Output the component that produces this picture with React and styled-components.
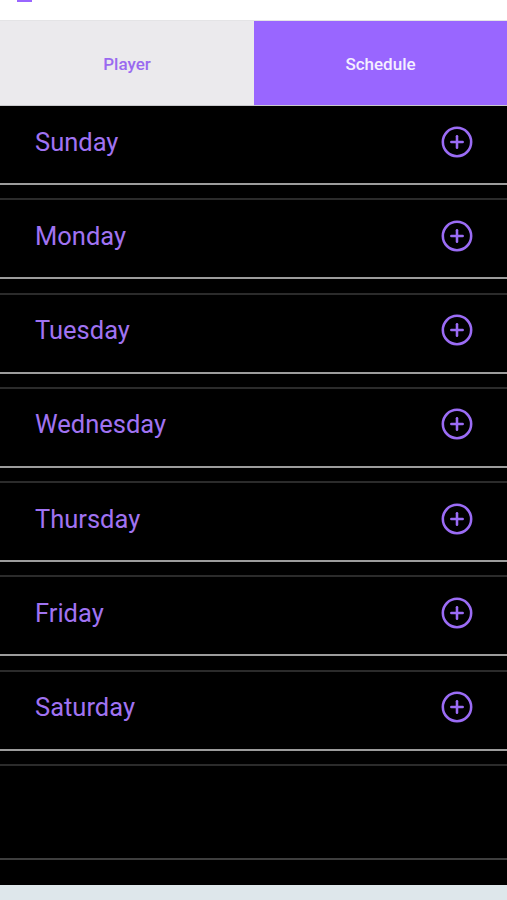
import React from 'react';
import styled, { createGlobalStyle } from 'styled-components';
import { CirclePlus } from 'lucide-react';

const GlobalStyle = createGlobalStyle`
  html, body {
    margin: 0;
    padding: 0;
    background: #000;
    font-family: Roboto, "Liberation Sans", sans-serif;
  }
`;

const days = ['Sunday', 'Monday', 'Tuesday', 'Wednesday', 'Thursday', 'Friday', 'Saturday'];

const Screen = styled.div`
  width: 507px;
  height: 900px;
  display: flex;
  flex-direction: column;
  background: #000;
  overflow: hidden;
`;

const TopBar = styled.div`
  height: 21px;
  background: #fff;
  border-bottom: 1px solid #e4e4e6;
  box-sizing: border-box;
  padding-left: 17px;
`;

const TopMark = styled.div`
  width: 15px;
  height: 2px;
  background: #9966ff;
`;

const Tabs = styled.div`
  display: grid;
  grid-template-columns: 254px 1fr;
  height: 84px;
  border-bottom: 1px solid #c9c9cc;
`;

const Tab = styled.div`
  display: flex;
  align-items: center;
  justify-content: center;
  font-size: 17px;
  font-weight: 500;
  padding-top: 2px;
  background: ${({ active }) => (active ? '#9966ff' : '#ebeaed')};
  color: ${({ active }) => (active ? '#f4efff' : '#9a6af0')};
`;

const List = styled.div`
  display: flex;
  flex-direction: column;
  gap: 13.3px;
`;

const DayRow = styled.div`
  display: flex;
  align-items: center;
  justify-content: space-between;
  height: ${({ tall, first }) => (tall ? '96px' : first ? '79px' : '81px')};
  padding: 0 33px 6px 35px;
  border-top: ${({ first }) => (first ? 'none' : '2px solid #2b2b2b')};
  border-bottom: 2px solid ${({ tall }) => (tall ? '#3e3e3e' : '#9c9c9c')};
  box-sizing: border-box;
`;

const DayName = styled.span`
  font-size: 25.5px;
  color: #a073f2;
`;

const AddButton = styled.button`
  background: none;
  border: none;
  padding: 0;
  display: flex;
  color: #9b6cf5;
`;

const Spacer = styled.div`
  flex: 1;
`;

const Footer = styled.div`
  height: 15px;
  background: #dee7eb;
`;

export default function App() {
  return (
    <>
      <GlobalStyle />
      <Screen>
        <TopBar>
          <TopMark />
        </TopBar>
        <Tabs>
          <Tab>Player</Tab>
          <Tab active>Schedule</Tab>
        </Tabs>
        <List>
          {days.map((d, i) => (
            <DayRow key={d} first={i === 0}>
              <DayName>{d}</DayName>
              <AddButton>
                <CirclePlus size={34} strokeWidth={1.8} />
              </AddButton>
            </DayRow>
          ))}
          <DayRow tall />
        </List>
        <Spacer />
        <Footer />
      </Screen>
    </>
  );
}
